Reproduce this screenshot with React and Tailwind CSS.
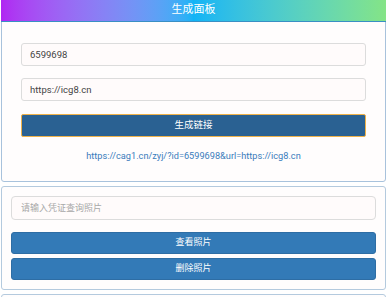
import React from 'react';

const font = { fontFamily: 'Roboto, "Noto Sans CJK SC", sans-serif' };

export default function App() {
  return (
    <div className="bg-white w-[390px] h-[297px] overflow-hidden pt-0" style={font}>
      {/* 生成面板 */}
      <div className="ml-[1px] w-[385px] border border-[#a8c2dc] rounded-b-[3px] bg-[#fffdfd]">
        <div className="h-[22px] -mx-px -mt-px flex items-center justify-center text-white text-[11px] bg-gradient-to-r from-[#b026f2] via-[#10b4f6] to-[#84e486] border-b border-[#3a8fc4]">
          生成面板
        </div>
        <div className="px-[19px] pt-[21px] pb-[18px] flex flex-col">
          <input className="h-[23px] w-full border border-[#dcdcdc] rounded-[3px] bg-[#fffbfb] px-[8px] text-[9.5px] text-[#444] outline-none" defaultValue="6599698" />
          <input className="mt-[12px] h-[23px] w-full border border-[#dcdcdc] rounded-[3px] bg-[#fffbfb] px-[8px] text-[9.5px] text-[#444] outline-none" defaultValue="https://icg8.cn" />
          <button className="mt-[13px] h-[23px] w-full bg-[#2a6192] border border-[#efb24a] rounded-[2px] text-white text-[9.5px]">生成链接</button>
          <a className="mt-[12px] text-center text-[9.2px] text-[#3a7cbc] leading-[14px]">https://cag1.cn/zyj/?id=6599698&amp;url=https://icg8.cn</a>
        </div>
      </div>

      {/* 查询照片 */}
      <div className="ml-[1px] mt-[4px] w-[385px] border border-[#b4cade] rounded-[3px] bg-[#fffdfd] p-[9px] flex flex-col">
        <input className="h-[24px] w-full border border-[#dcdcdc] rounded-[4px] bg-[#fffbfb] px-[9px] text-[9px] outline-none placeholder:text-[#a8a8a8]" placeholder="请输入凭证查询照片" />
        <button className="mt-[12px] h-[22px] w-full bg-[#337ab7] border border-[#2e6da4] rounded-[3px] text-white text-[9px]">查看照片</button>
        <button className="mt-[4px] h-[22px] w-full bg-[#337ab7] border border-[#2e6da4] rounded-[3px] text-white text-[9px]">删除照片</button>
      </div>

      <div className="ml-[1px] mt-[4px] w-[385px] h-[20px] border border-[#b4cade] rounded-[3px] bg-[#fffdfd]"></div>
    </div>
  );
}
